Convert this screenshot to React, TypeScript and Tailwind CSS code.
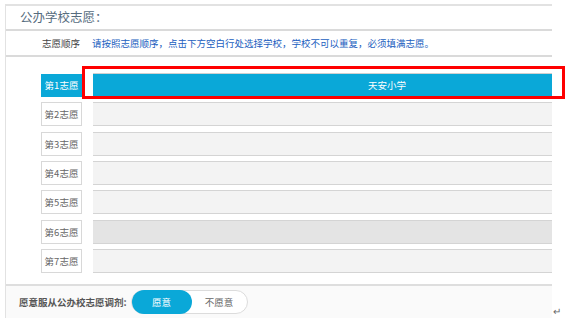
import React from "react";

const FONT = '"Microsoft YaHei","Noto Sans CJK SC","Noto Sans",sans-serif';

export default function App() {
  const rows = [1, 2, 3, 4, 5, 6, 7];
  return (
    <div
      className="relative w-[572px] h-[329px] bg-white overflow-hidden"
      style={{ fontFamily: FONT }}
    >
      <div className="flex items-end pl-[5px] pt-[4px]">
        <div className="w-[547px] border-l border-t-2 border-[#e2e2e2] flex flex-col">
          <div className="h-[25px] border-b-2 border-[#dadada] flex items-center pl-[14px] text-[12.5px] text-[#566c7e]">
            公办学校志愿：
          </div>
          <div className="h-[26px] border-b-2 border-[#dadada] flex items-center pl-[36px] text-[9.5px]">
            <span className="text-[#444]">志愿顺序</span>
            <span className="ml-[12px] text-[#2260c0]">
              请按照志愿顺序，点击下方空白行处选择学校，学校不可以重复，必须填满志愿。
            </span>
          </div>
          <div className="flex flex-col gap-[5.33px] pt-[16px] pb-[11px]">
            {rows.map((n) => {
              const active = n === 1;
              return (
                <div key={n} className="flex items-center h-[24px]">
                  <div
                    className={
                      active
                        ? "ml-[35px] w-[41px] h-[23px] flex items-center justify-center bg-[#0aa8d8] text-white text-[9.5px]"
                        : "ml-[35px] w-[41px] h-[24px] flex items-center justify-center bg-white border border-[#d8d8d8] text-[#666] text-[9.5px]"
                    }
                  >
                    第{n}志愿
                  </div>
                  <div
                    className={
                      active
                        ? "ml-[11px] flex-1 h-[24px] border-y border-[#d0d0d0] bg-[#0aa8d8] flex items-center pl-[275px] text-white text-[9.5px]"
                        : n === 6
                        ? "ml-[11px] flex-1 h-[24px] border-y border-[#d4d4d4] bg-[#e4e4e4]"
                        : "ml-[11px] flex-1 h-[24px] border-y border-[#d4d4d4] bg-[#f3f3f3]"
                    }
                  >
                    {active ? "天安小学" : null}
                  </div>
                </div>
              );
            })}
          </div>
          <div className="h-[34px] border-t-2 border-[#dedede] bg-[#fafafa] flex items-center pl-[13px]">
            <span className="text-[9.5px] font-bold text-[#555]">愿意服从公办校志愿调剂:</span>
            <div className="ml-[4px] w-[117px] h-[24px] rounded-full border border-[#dcdcdc] bg-white flex items-center">
              <div className="w-[60px] h-[24px] rounded-full bg-[#0aa8d8] text-white text-[9.5px] flex items-center justify-center">
                愿意
              </div>
              <div className="flex-1 text-center text-[9.5px] text-[#666]">不愿意</div>
            </div>
          </div>
        </div>
        <span className="ml-[1px] mb-[2px] text-[10px] leading-none text-[#666]">↵</span>
      </div>
      <div className="absolute left-[82px] top-[66px] w-[483px] h-[33px] border-[3px] border-[#ff0000]" />
    </div>
  );
}
